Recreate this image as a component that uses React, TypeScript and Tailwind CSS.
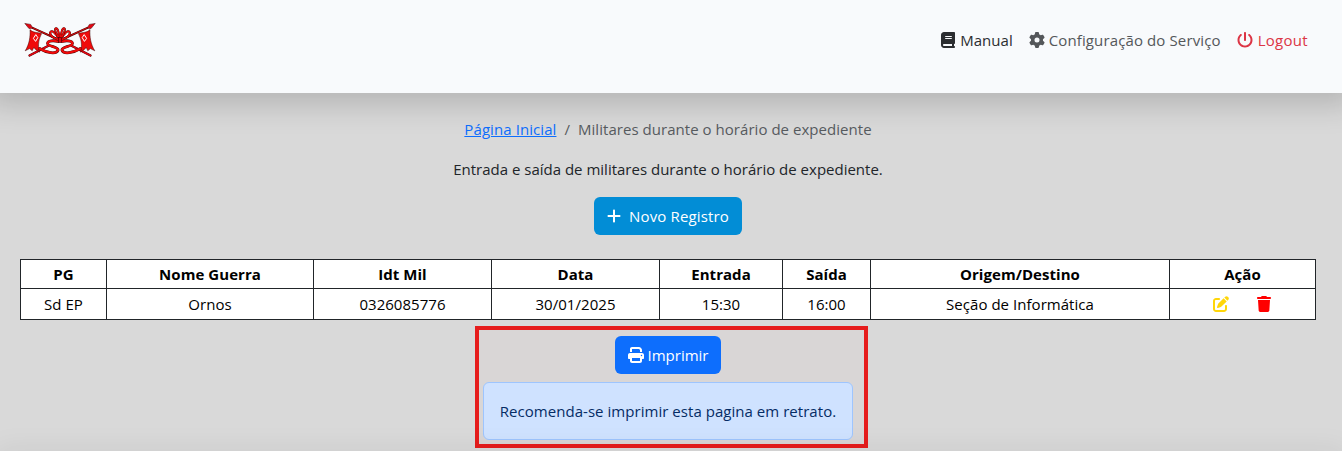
import type { ReactNode } from "react";
import { FaBook, FaGear, FaPowerOff, FaPlus, FaPenToSquare, FaTrash, FaPrint } from "react-icons/fa6";

const outerLoop = "M35 17.5 C31 17 25.5 14 26.2 10.6 C27.4 7 32 11 35 17.5";
const innerLoop = "M35 16.5 C32.5 12 30 7.5 31.6 6.4 C34 5.4 34.8 11 35.6 16";
const ribbon = "M34 19.5 C27 17.5 22 20 24 22.4 C26.5 25 35 25 34 28.4 C32 32.6 23 31 15.5 26.5";

function HalfEmblem() {
  return (
    <g strokeLinejoin="round">
      <path d="M5.5 33.5 L24 24" stroke="#3a0505" strokeWidth="2.2" strokeLinecap="round" />
      <path d="M5.5 33.5 L24 24" stroke="#e30613" strokeWidth="1.5" strokeLinecap="round" />
      <path d="M8 5.6 L33 17" stroke="#3a0505" strokeWidth="2" />
      <path d="M8 5.6 L33 17" stroke="#d40d0d" strokeWidth="1.1" />
      <path d="M0.8 1.4 L6.6 2.4 L9 6.2 L5 6.6 Z" fill="#e30613" stroke="#3a0505" strokeWidth="0.5" />
      <path
        d="M6 7.6 C9 11 13 10 17.6 11.6 C15 17 13.4 22 15.4 30.2 L11.6 27.5 L9.8 25.4 L8.2 28.8 L5.6 26.6 L1.2 28.8 C5.4 22 6.4 15 6 7.6Z"
        fill="#f00a0a"
        stroke="#3a0505"
        strokeWidth="0.5"
      />
      <path d="M11.8 12.6 L13.8 15.6 L11.6 19.4 L9.4 16.4Z" fill="#f00a0a" stroke="#fff" strokeWidth="1" />
      <g fill="none" strokeLinecap="round">
        <path d={ribbon} stroke="#3a0505" strokeWidth="2.8" />
        <path d={ribbon} stroke="#f00a0a" strokeWidth="2.2" />
        <path d={outerLoop} stroke="#3a0505" strokeWidth="2.2" />
        <path d={outerLoop} stroke="#f00a0a" strokeWidth="1.6" />
        <path d={innerLoop} stroke="#3a0505" strokeWidth="2" />
        <path d={innerLoop} stroke="#f00a0a" strokeWidth="1.5" />
      </g>
    </g>
  );
}

function Logo() {
  return (
    <svg viewBox="0 0 72 36" className="h-9 w-[72px]" aria-hidden="true">
      <HalfEmblem />
      <g transform="translate(72 0) scale(-1 1)">
        <HalfEmblem />
      </g>
      <rect x="34.4" y="15.5" width="3.2" height="5" fill="#e30613" stroke="#3a0505" strokeWidth="0.6" />
    </svg>
  );
}

const columns: { title: string; value: ReactNode; width: string }[] = [
  { title: "PG", value: "Sd EP", width: "w-[85px]" },
  { title: "Nome Guerra", value: "Ornos", width: "w-[206px]" },
  { title: "Idt Mil", value: "0326085776", width: "w-[177px]" },
  { title: "Data", value: "30/01/2025", width: "w-[167px]" },
  { title: "Entrada", value: "15:30", width: "w-[122px]" },
  { title: "Saída", value: "16:00", width: "w-[87px]" },
  { title: "Origem/Destino", value: "Seção de Informática", width: "w-[298px]" },
  {
    title: "Ação",
    value: (
      <span className="flex items-center justify-center gap-7 pr-px">
        <FaPenToSquare className="size-4 text-[#ffd60a]" />
        <FaTrash className="h-4 w-3.5 text-[#ff0000]" />
      </span>
    ),
    width: "w-[145px]",
  },
];

export default function App() {
  return (
    <div className="flex h-[451px] flex-col overflow-hidden bg-[#d9d9d9] font-['Open_Sans','Noto_Sans',sans-serif] text-[15px] leading-6 text-[#212529]">
      <header className="z-10 flex h-[93px] shrink-0 items-start justify-between bg-[#f8fafc] pt-[22px] pr-[34px] pl-6 shadow-[0_0_28px_12px_rgba(0,0,0,0.17)]">
        <Logo />
        <nav className="flex gap-4 pt-[6px]">
          <a className="flex items-center gap-[5px] text-[#2b2d30]">
            <FaBook className="h-4 w-3.5" />
            <span className="tracking-[0.04px]">Manual</span>
          </a>
          <a className="flex items-center gap-1 text-[#54575a]">
            <FaGear className="size-4" />
            <span className="tracking-[0.12px]">Configuração do Serviço</span>
          </a>
          <a className="flex items-center gap-[5px] text-[#dc3545]">
            <FaPowerOff className="size-4" />
            <span className="tracking-[0.3px]">Logout</span>
          </a>
        </nav>
      </header>

      <main className="flex shrink-0 flex-col items-center pt-6 pr-[6px]">
        <nav className="flex h-6 gap-2 text-[#575b5f]">
          <a className="tracking-[0.08px] text-[#0d6efd] underline">Página Inicial</a>
          <span>/</span>
          <span className="tracking-[0.04px]">Militares durante o horário de expediente</span>
        </nav>
        <p className="mt-4 h-6">Entrada e saída de militares durante o horário de expediente.</p>
        <button className="mt-4 flex h-[38px] w-[148px] items-center justify-center gap-2 rounded-md bg-[#028dd6] text-white">
          <FaPlus className="h-4 w-3.5" />
          <span className="tracking-[0.15px]">Novo Registro</span>
        </button>

        <table className="mt-6 w-[1296px] table-fixed border-separate border-spacing-px bg-[#212529] text-center text-black">
          <thead>
            <tr className="h-7">
              {columns.map((c) => (
                <th key={c.title} className={`${c.width} bg-white p-0 leading-7 font-bold tracking-[0.05px]`}>
                  {c.title}
                </th>
              ))}
            </tr>
          </thead>
          <tbody>
            <tr className="h-[30px]">
              {columns.map((c) => (
                <td key={c.title} className="bg-white p-0 leading-[30px] tracking-[0.04px]">
                  {c.value}
                </td>
              ))}
            </tr>
          </tbody>
        </table>

        <section className="mt-[6px] ml-[7px] flex h-[122px] w-[393px] flex-col items-center border-4 border-[#e61c1c] bg-[#d9d6d6] pt-[6px] pr-[7px]">
          <button className="flex h-[38px] w-[106px] items-center justify-center gap-1 rounded-md bg-[#0d6efd] text-white">
            <FaPrint className="size-4" />
            <span>Imprimir</span>
          </button>
          <div className="mt-2 flex h-[58px] w-[370px] items-center justify-center rounded-md border border-[#9ec5fe] bg-[#cfe2ff] text-[#052c65]">
            <span className="tracking-[0.04px]">Recomenda-se imprimir esta pagina em retrato.</span>
          </div>
        </section>
      </main>
      <footer className="mt-1 h-6 shrink-0 shadow-[0_0_28px_4px_rgba(0,0,0,0.06)]" />
    </div>
  );
}
